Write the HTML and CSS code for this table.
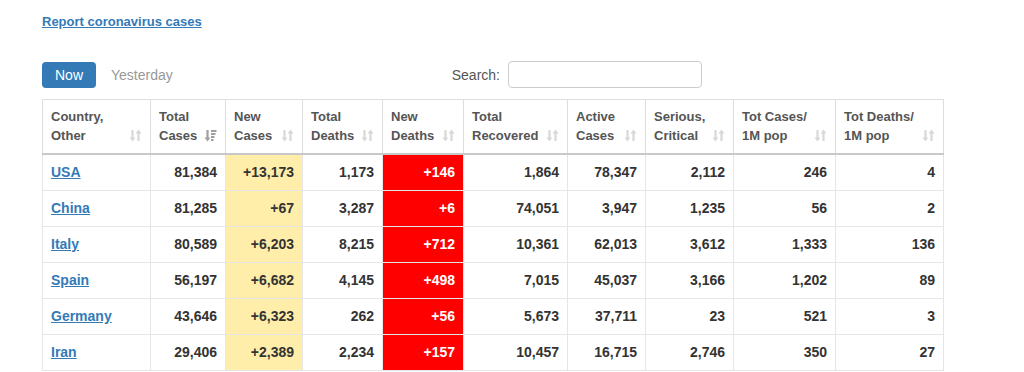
FILE: index.html
```html
<!DOCTYPE html>
<html>
<head>
<meta charset="utf-8">
<link rel="stylesheet" href="styles.css">
</head>
<body>
<div class="page">
  <a class="report" href="#">Report coronavirus cases</a>
  <div class="controls">
    <div class="tabs">
      <span class="tab active">Now</span>
      <span class="tab">Yesterday</span>
    </div>
    <label class="search">Search: <input type="text"></label>
  </div>
  <table class="stats">
    <colgroup>
      <col style="width:108px"><col style="width:75px"><col style="width:77px"><col style="width:80px"><col style="width:81px"><col style="width:104px"><col style="width:78px"><col style="width:88px"><col style="width:102px"><col style="width:108px">
    </colgroup>
    <thead>
      <tr>
        <th><div class="hd"><span>Country,<br>Other</span><svg class="sort" viewBox="0 0 13 13"><path d="M3.5 1v8.5M9.5 3.5v8.5" /><polygon points="0.5,8.5 6.5,8.5 3.5,12.5"/><polygon points="6.5,4.5 12.5,4.5 9.5,0.5"/></svg></div></th>
        <th><div class="hd"><span>Total<br>Cases</span><svg class="sort on" viewBox="0 0 13 13"><path d="M3.5 1v8.5" /><polygon points="0.5,8.5 6.5,8.5 3.5,12.5"/><rect x="7" y="1" width="5.5" height="2"/><rect x="7" y="4" width="4.5" height="2"/><rect x="7" y="7" width="3.5" height="2"/><rect x="7" y="10" width="2.5" height="2"/></svg></div></th>
        <th><div class="hd"><span>New<br>Cases</span><svg class="sort" viewBox="0 0 13 13"><path d="M3.5 1v8.5M9.5 3.5v8.5" /><polygon points="0.5,8.5 6.5,8.5 3.5,12.5"/><polygon points="6.5,4.5 12.5,4.5 9.5,0.5"/></svg></div></th>
        <th><div class="hd"><span>Total<br>Deaths</span><svg class="sort" viewBox="0 0 13 13"><path d="M3.5 1v8.5M9.5 3.5v8.5" /><polygon points="0.5,8.5 6.5,8.5 3.5,12.5"/><polygon points="6.5,4.5 12.5,4.5 9.5,0.5"/></svg></div></th>
        <th><div class="hd"><span>New<br>Deaths</span><svg class="sort" viewBox="0 0 13 13"><path d="M3.5 1v8.5M9.5 3.5v8.5" /><polygon points="0.5,8.5 6.5,8.5 3.5,12.5"/><polygon points="6.5,4.5 12.5,4.5 9.5,0.5"/></svg></div></th>
        <th><div class="hd"><span>Total<br>Recovered</span><svg class="sort" viewBox="0 0 13 13"><path d="M3.5 1v8.5M9.5 3.5v8.5" /><polygon points="0.5,8.5 6.5,8.5 3.5,12.5"/><polygon points="6.5,4.5 12.5,4.5 9.5,0.5"/></svg></div></th>
        <th><div class="hd"><span>Active<br>Cases</span><svg class="sort" viewBox="0 0 13 13"><path d="M3.5 1v8.5M9.5 3.5v8.5" /><polygon points="0.5,8.5 6.5,8.5 3.5,12.5"/><polygon points="6.5,4.5 12.5,4.5 9.5,0.5"/></svg></div></th>
        <th><div class="hd"><span>Serious,<br>Critical</span><svg class="sort" viewBox="0 0 13 13"><path d="M3.5 1v8.5M9.5 3.5v8.5" /><polygon points="0.5,8.5 6.5,8.5 3.5,12.5"/><polygon points="6.5,4.5 12.5,4.5 9.5,0.5"/></svg></div></th>
        <th><div class="hd"><span>Tot&nbsp;Cases/<br>1M pop</span><svg class="sort" viewBox="0 0 13 13"><path d="M3.5 1v8.5M9.5 3.5v8.5" /><polygon points="0.5,8.5 6.5,8.5 3.5,12.5"/><polygon points="6.5,4.5 12.5,4.5 9.5,0.5"/></svg></div></th>
        <th><div class="hd"><span>Tot&nbsp;Deaths/<br>1M pop</span><svg class="sort" viewBox="0 0 13 13"><path d="M3.5 1v8.5M9.5 3.5v8.5" /><polygon points="0.5,8.5 6.5,8.5 3.5,12.5"/><polygon points="6.5,4.5 12.5,4.5 9.5,0.5"/></svg></div></th>
      </tr>
    </thead>
    <tbody>
      <tr><td class="c"><a href="#">USA</a></td><td>81,384</td><td class="nc">+13,173</td><td>1,173</td><td class="nd">+146</td><td>1,864</td><td>78,347</td><td>2,112</td><td>246</td><td>4</td></tr>
      <tr><td class="c"><a href="#">China</a></td><td>81,285</td><td class="nc">+67</td><td>3,287</td><td class="nd">+6</td><td>74,051</td><td>3,947</td><td>1,235</td><td>56</td><td>2</td></tr>
      <tr><td class="c"><a href="#">Italy</a></td><td>80,589</td><td class="nc">+6,203</td><td>8,215</td><td class="nd">+712</td><td>10,361</td><td>62,013</td><td>3,612</td><td>1,333</td><td>136</td></tr>
      <tr><td class="c"><a href="#">Spain</a></td><td>56,197</td><td class="nc">+6,682</td><td>4,145</td><td class="nd">+498</td><td>7,015</td><td>45,037</td><td>3,166</td><td>1,202</td><td>89</td></tr>
      <tr><td class="c"><a href="#">Germany</a></td><td>43,646</td><td class="nc">+6,323</td><td>262</td><td class="nd">+56</td><td>5,673</td><td>37,711</td><td>23</td><td>521</td><td>3</td></tr>
      <tr><td class="c"><a href="#">Iran</a></td><td>29,406</td><td class="nc">+2,389</td><td>2,234</td><td class="nd">+157</td><td>10,457</td><td>16,715</td><td>2,746</td><td>350</td><td>27</td></tr>
    </tbody>
  </table>
</div>
</body>
</html>
```

FILE: styles.css
```css
html, body {
  margin: 0;
  padding: 0;
  background: #fff;
}
body {
  font-family: "Liberation Sans", Arial, sans-serif;
  color: #333;
}
.page {
  padding: 13px 0 0 42px;
}
.report {
  display: block;
  width: max-content;
  font-size: 13px;
  font-weight: bold;
  line-height: 18px;
  color: #337ab7;
  text-decoration: underline;
}
.controls {
  display: flex;
  align-items: center;
  width: 660px;
  margin-top: 30px;
  height: 27px;
}
.tabs {
  display: flex;
  align-items: center;
  gap: 15px;
}
.tab {
  font-size: 14px;
  line-height: 26px;
  color: #999;
}
.tab.active {
  background: #337ab7;
  color: #fff;
  border-radius: 4px;
  padding: 0 13px;
}
.search {
  margin-left: auto;
  display: flex;
  align-items: center;
  gap: 8px;
  font-size: 14px;
  color: #555;
}
.search input {
  width: 194px;
  height: 27px;
  box-sizing: border-box;
  border: 1px solid #ccc;
  border-radius: 4px;
  margin: 0;
  padding: 0 6px;
}
.stats {
  margin-top: 11px;
  border-collapse: collapse;
  table-layout: fixed;
  width: 901px;
  border: 1px solid #ddd;
}
.stats th {
  font-size: 13px;
  font-weight: bold;
  color: #555;
  text-align: left;
  line-height: 19px;
  padding: 7px 8px 8px 8px;
  border: 1px solid #ddd;
  border-bottom: 2px solid #c8c8c8;
  vertical-align: bottom;
}
.hd {
  display: flex;
  justify-content: space-between;
  align-items: flex-end;
  white-space: nowrap;
}
.sort {
  width: 13px;
  height: 13px;
  margin-bottom: 3px;
  flex: none;
  fill: #d8d8d8;
  stroke: #d8d8d8;
}
.sort path {
  stroke-width: 2.2;
  fill: none;
}
.sort polygon, .sort rect {
  stroke: none;
}
.sort.on {
  fill: #a0a0a0;
  stroke: #a0a0a0;
}
.stats td {
  font-size: 14px;
  font-weight: bold;
  color: #333;
  line-height: 19px;
  padding: 8px 8px 8px 8px;
  border: 1px solid #e6e6e6;
  text-align: right;
  white-space: nowrap;
}
.stats td.c {
  text-align: left;
}
.stats td.c a {
  color: #337ab7;
  text-decoration: underline;
}
.stats td.nc {
  background: #ffeeaa;
}
.stats td.nd {
  background: #ff0000;
  color: #fff;
}
```
